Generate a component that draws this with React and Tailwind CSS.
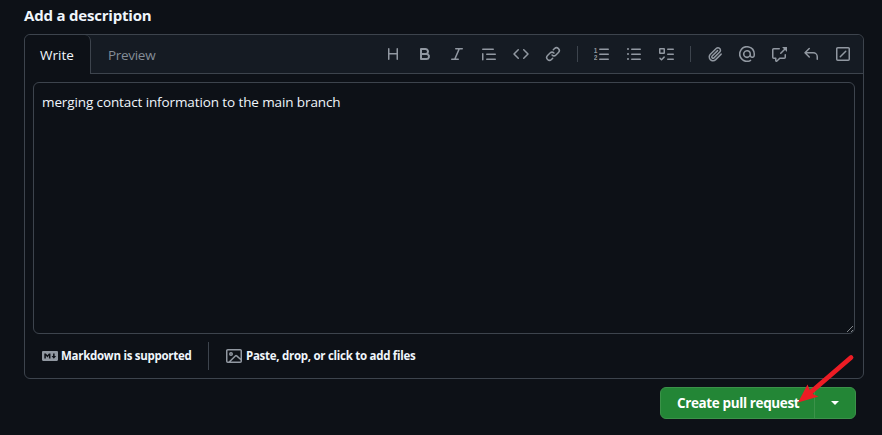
import { FaMarkdown } from "react-icons/fa6";

const paths = {
  heading: "M3.75 2a.75.75 0 0 1 .75.75V7h7V2.75a.75.75 0 0 1 1.5 0v10.5a.75.75 0 0 1-1.5 0V8.5h-7v4.75a.75.75 0 0 1-1.5 0V2.75A.75.75 0 0 1 3.75 2Z",
  bold: "M4 2h4.5a3.501 3.501 0 0 1 2.852 5.53A3.499 3.499 0 0 1 9.5 14H4a1 1 0 0 1-1-1V3a1 1 0 0 1 1-1Zm1 7v3h4.5a1.5 1.5 0 0 0 0-3Zm3.5-2a1.5 1.5 0 0 0 0-3H5v3Z",
  italic: "M6 2.75A.75.75 0 0 1 6.75 2h6.5a.75.75 0 0 1 0 1.5h-2.505l-3.858 9H9.25a.75.75 0 0 1 0 1.5h-6.5a.75.75 0 0 1 0-1.5h2.505l3.858-9H6.75A.75.75 0 0 1 6 2.75Z",
  quote: "M1.75 2.5h10.5a.75.75 0 0 1 0 1.5H1.75a.75.75 0 0 1 0-1.5Zm4 5h8.5a.75.75 0 0 1 0 1.5h-8.5a.75.75 0 0 1 0-1.5Zm0 5h8.5a.75.75 0 0 1 0 1.5h-8.5a.75.75 0 0 1 0-1.5ZM2.5 7.75v6a.75.75 0 0 1-1.5 0v-6a.75.75 0 0 1 1.5 0Z",
  code: "m11.28 3.22 4.25 4.25a.75.75 0 0 1 0 1.06l-4.25 4.25a.749.749 0 0 1-1.275-.326.749.749 0 0 1 .215-.734L13.94 8l-3.72-3.72a.749.749 0 0 1 .326-1.275.749.749 0 0 1 .734.215Zm-6.56 0a.751.751 0 0 1 1.042.018.751.751 0 0 1 .018 1.042L2.06 8l3.72 3.72a.749.749 0 0 1-.326 1.275.749.749 0 0 1-.734-.215L.47 8.53a.75.75 0 0 1 0-1.06Z",
  link: "m7.775 3.275 1.25-1.25a3.5 3.5 0 1 1 4.95 4.95l-2.5 2.5a3.5 3.5 0 0 1-4.95 0 .751.751 0 0 1 .018-1.042.751.751 0 0 1 1.042-.018 1.998 1.998 0 0 0 2.83 0l2.5-2.5a2.002 2.002 0 0 0-2.83-2.83l-1.25 1.25a.751.751 0 0 1-1.042-.018.751.751 0 0 1-.018-1.042Zm-4.69 9.64a1.998 1.998 0 0 0 2.83 0l1.25-1.25a.751.751 0 0 1 1.042.018.751.751 0 0 1 .018 1.042l-1.25 1.25a3.5 3.5 0 1 1-4.95-4.95l2.5-2.5a3.5 3.5 0 0 1 4.95 0 .751.751 0 0 1-.018 1.042.751.751 0 0 1-1.042.018 1.998 1.998 0 0 0-2.83 0l-2.5 2.5a1.998 1.998 0 0 0 0 2.83Z",
  ordered: "M5 3.25a.75.75 0 0 1 .75-.75h8.5a.75.75 0 0 1 0 1.5h-8.5A.75.75 0 0 1 5 3.25Zm0 5a.75.75 0 0 1 .75-.75h8.5a.75.75 0 0 1 0 1.5h-8.5A.75.75 0 0 1 5 8.25Zm0 5a.75.75 0 0 1 .75-.75h8.5a.75.75 0 0 1 0 1.5h-8.5a.75.75 0 0 1-.75-.75Z",
  unordered: "M5.75 2.5h8.5a.75.75 0 0 1 0 1.5h-8.5a.75.75 0 0 1 0-1.5Zm0 5h8.5a.75.75 0 0 1 0 1.5h-8.5a.75.75 0 0 1 0-1.5Zm0 5h8.5a.75.75 0 0 1 0 1.5h-8.5a.75.75 0 0 1 0-1.5ZM2 14a1 1 0 1 1 0-2 1 1 0 0 1 0 2Zm1-6a1 1 0 1 1-2 0 1 1 0 0 1 2 0ZM2 4a1 1 0 1 1 0-2 1 1 0 0 1 0 2Z",
  tasklist: "M2 2h4a1 1 0 0 1 1 1v4a1 1 0 0 1-1 1H2a1 1 0 0 1-1-1V3a1 1 0 0 1 1-1Zm4.655 8.595a.75.75 0 0 1 0 1.06L4.03 14.28a.75.75 0 0 1-1.06 0l-1.5-1.5a.749.749 0 0 1 .326-1.275.749.749 0 0 1 .734.215l.97.97 2.095-2.095a.75.75 0 0 1 1.06 0ZM9.75 2.5h5.5a.75.75 0 0 1 0 1.5h-5.5a.75.75 0 0 1 0-1.5Zm0 5h5.5a.75.75 0 0 1 0 1.5h-5.5a.75.75 0 0 1 0-1.5Zm0 5h5.5a.75.75 0 0 1 0 1.5h-5.5a.75.75 0 0 1 0-1.5Zm-7.25-9v3h3v-3Z",
  paperclip: "M12.212 3.02a1.753 1.753 0 0 0-2.478.003l-5.83 5.83a3.007 3.007 0 0 0-.88 2.127c0 .795.315 1.551.88 2.116.567.567 1.333.89 2.126.89.79 0 1.548-.321 2.116-.89l5.48-5.48a.75.75 0 0 1 1.061 1.06l-5.48 5.48a4.492 4.492 0 0 1-3.177 1.33c-1.2 0-2.345-.487-3.187-1.33a4.483 4.483 0 0 1-1.32-3.177c0-1.195.475-2.341 1.32-3.186l5.83-5.83a3.25 3.25 0 0 1 5.553 2.297c0 .863-.343 1.691-.953 2.301L7.439 12.39c-.375.377-.884.59-1.416.593a1.998 1.998 0 0 1-1.412-.593 1.992 1.992 0 0 1 0-2.828l5.48-5.48a.751.751 0 0 1 1.042.018.751.751 0 0 1 .018 1.042l-5.48 5.48a.492.492 0 0 0 0 .707.499.499 0 0 0 .352.154.51.51 0 0 0 .356-.154l5.833-5.827a1.755 1.755 0 0 0 0-2.481Z",
  mention: "M4.75 2.37a6.501 6.501 0 0 0 6.5 11.26.75.75 0 0 1 .75 1.298A7.999 7.999 0 0 1 .989 4.148 8 8 0 0 1 16 7.75v1.5a2.75 2.75 0 0 1-5.072 1.475 3.999 3.999 0 0 1-6.65-4.19A4 4 0 0 1 12 8v1.25a1.25 1.25 0 0 0 2.5 0V7.867a6.5 6.5 0 0 0-9.75-5.496ZM10.5 8a2.5 2.5 0 1 0-5 0 2.5 2.5 0 0 0 5 0Z",
  crossRef: "M2.75 3.5a.25.25 0 0 0-.25.25v7.5c0 .138.112.25.25.25h2a.75.75 0 0 1 .75.75v2.19l2.72-2.72a.749.749 0 0 1 .53-.22h4.5a.25.25 0 0 0 .25-.25v-2.5a.75.75 0 0 1 1.5 0v2.5A1.75 1.75 0 0 1 13.25 13H9.06l-2.573 2.573A1.458 1.458 0 0 1 4 14.543V13H2.75A1.75 1.75 0 0 1 1 11.25v-7.5C1 2.784 1.784 2 2.75 2h5.5a.75.75 0 0 1 0 1.5ZM16 1.25v4.146a.25.25 0 0 1-.427.177L14.03 4.03l-3.75 3.75a.749.749 0 0 1-1.275-.326.749.749 0 0 1 .215-.734l3.75-3.75-1.543-1.543A.25.25 0 0 1 11.604 1h4.146a.25.25 0 0 1 .25.25Z",
  reply: "M6.78 1.97a.75.75 0 0 1 0 1.06L3.81 6h6.44A4.75 4.75 0 0 1 15 10.75v2.5a.75.75 0 0 1-1.5 0v-2.5a3.25 3.25 0 0 0-3.25-3.25H3.81l2.97 2.97a.749.749 0 0 1-.326 1.275.749.749 0 0 1-.734-.215L1.47 7.28a.75.75 0 0 1 0-1.06l4.25-4.25a.75.75 0 0 1 1.06 0Z",
  slash: "M13.25 1c.966 0 1.75.784 1.75 1.75v10.5A1.75 1.75 0 0 1 13.25 15H2.75A1.75 1.75 0 0 1 1 13.25V2.75C1 1.784 1.784 1 2.75 1ZM2.75 2.5a.25.25 0 0 0-.25.25v10.5c0 .138.112.25.25.25h10.5a.25.25 0 0 0 .25-.25V2.75a.25.25 0 0 0-.25-.25Zm8.53 3.28-5.5 5.5a.75.75 0 0 1-1.06-1.06l5.5-5.5a.75.75 0 0 1 1.06 1.06Z",
  image: "M16 13.25A1.75 1.75 0 0 1 14.25 15H1.75A1.75 1.75 0 0 1 0 13.25V2.75C0 1.784.784 1 1.75 1h12.5c.966 0 1.75.784 1.75 1.75ZM1.75 2.5a.25.25 0 0 0-.25.25v10.5c0 .138.112.25.25.25h.94l.03-.03 6.077-6.078a1.75 1.75 0 0 1 2.412-.06L14.5 10.31V2.75a.25.25 0 0 0-.25-.25Zm12.5 11a.25.25 0 0 0 .25-.25v-.917l-4.298-3.889a.25.25 0 0 0-.344.009L4.81 13.5ZM7 6a2 2 0 1 1-3.999.001A2 2 0 0 1 7 6ZM5.5 6a.5.5 0 1 0-1 0 .5.5 0 0 0 1 0Z",
};

function Icon({ name }) {
  return (
    <svg viewBox="0 0 16 16" className="size-4 shrink-0 fill-current" aria-hidden="true">
      <path d={paths[name]} />
      {name === "ordered" && (
        <g className="font-['Liberation_Sans'] text-[6.5px] font-bold">
          <text x="-0.2" y="6.8">1</text>
          <text x="-0.2" y="14">2</text>
        </g>
      )}
    </svg>
  );
}

const groups = [
  ["heading", "bold", "italic", "quote", "code", "link"],
  ["ordered", "unordered", "tasklist"],
  ["paperclip", "mention", "crossRef", "reply", "slash"],
];

function Toolbar() {
  return (
    <div className="ml-auto flex h-full items-center pr-1 text-[#9198a1]">
      {groups.map((names, i) => (
        <div key={i} className="flex items-center">
          {i > 0 && <span className="mx-2 h-4 w-px bg-[#3d444d]" />}
          {names.map((name) => (
            <button key={name} aria-label={name} className="flex h-8 w-8 items-center justify-center">
              <Icon name={name} />
            </button>
          ))}
        </div>
      ))}
    </div>
  );
}

export default function App() {
  return (
    <main className="relative h-[435px] w-[882px] overflow-hidden bg-[#0d1117] pt-1 pr-[18px] pl-6 font-['Open_Sans','Noto_Sans',sans-serif] text-[#f0f6fc]">
      <h1 className="h-[30px] text-[15px] leading-[22px] font-bold tracking-[-0.2px] whitespace-nowrap">Add a description</h1>

      <section className="flex h-[345px] flex-col rounded-md border border-[#3d444d]">
        <header className="flex h-[39px] shrink-0 rounded-t-md bg-[#151b23]">
          <button className="h-full w-[66px] shrink-0 rounded-t-md border-r border-[#3d444d] bg-[#0d1117] pt-0.5 pl-[15px] text-left text-[13.5px]">Write</button>
          <div className="flex flex-1 items-center border-b border-[#3d444d]">
            <button className="pt-0.5 pl-[17px] text-[13.5px] tracking-[-0.3px] text-[#848d97]">Preview</button>
            <Toolbar />
          </div>
        </header>

        <div className="relative mx-2 mt-2 h-[252px] shrink-0 rounded-md border border-[#3d444d] px-2 py-[9px] text-[13.5px] leading-[21px] tracking-[-0.11px] whitespace-nowrap">
          merging contact information to the main branch
          <svg viewBox="0 0 8 8" className="absolute right-0 bottom-0 size-2" fill="none" stroke="#a0a4a8" strokeWidth="0.8">
            <path d="M1 7 7 1M5 7l2-2" />
          </svg>
        </div>

        <footer className="flex flex-1 items-center pl-[17px] text-[11.5px] font-bold tracking-[-0.28px] whitespace-nowrap">
          <div className="flex w-[166px] items-center gap-[3px]">
            <FaMarkdown className="h-4 w-4 shrink-0 text-[#9198a1]" />
            <span>Markdown is supported</span>
          </div>
          <span className="h-7 w-px bg-[#3d444d]" />
          <div className="ml-[17px] flex items-center gap-1">
            <span className="text-[#9198a1]"><Icon name="image" /></span>
            <span>Paste, drop, or click to add files</span>
          </div>
        </footer>
      </section>

      <div className="mt-2 mr-2 ml-auto flex h-8 w-[196px] rounded-md border border-[#3b9249] bg-[#238636] text-white">
        <button className="w-[154px] border-r border-[#3b9249] pl-4 text-left text-[13.5px] font-bold tracking-[-0.38px] whitespace-nowrap">Create pull request</button>
        <button aria-label="More options" className="flex flex-1 items-center justify-center">
          <svg viewBox="0 0 8 4" className="h-1 w-2 fill-current"><path d="M0 0h8L4 4Z" /></svg>
        </button>
      </div>

      <svg viewBox="0 0 60 52" className="absolute top-[353px] left-[796px] h-[52px] w-[60px] overflow-visible" aria-hidden="true">
        <path d="M55 4.500 15 39" stroke="#ed1c24" strokeWidth="4.8" strokeLinecap="round" />
        <path d="M2 49.500 11.500 31.500 14 37.500 17.500 41.500 22.500 43.500Z" fill="#ed1c24" />
      </svg>
    </main>
  );
}
